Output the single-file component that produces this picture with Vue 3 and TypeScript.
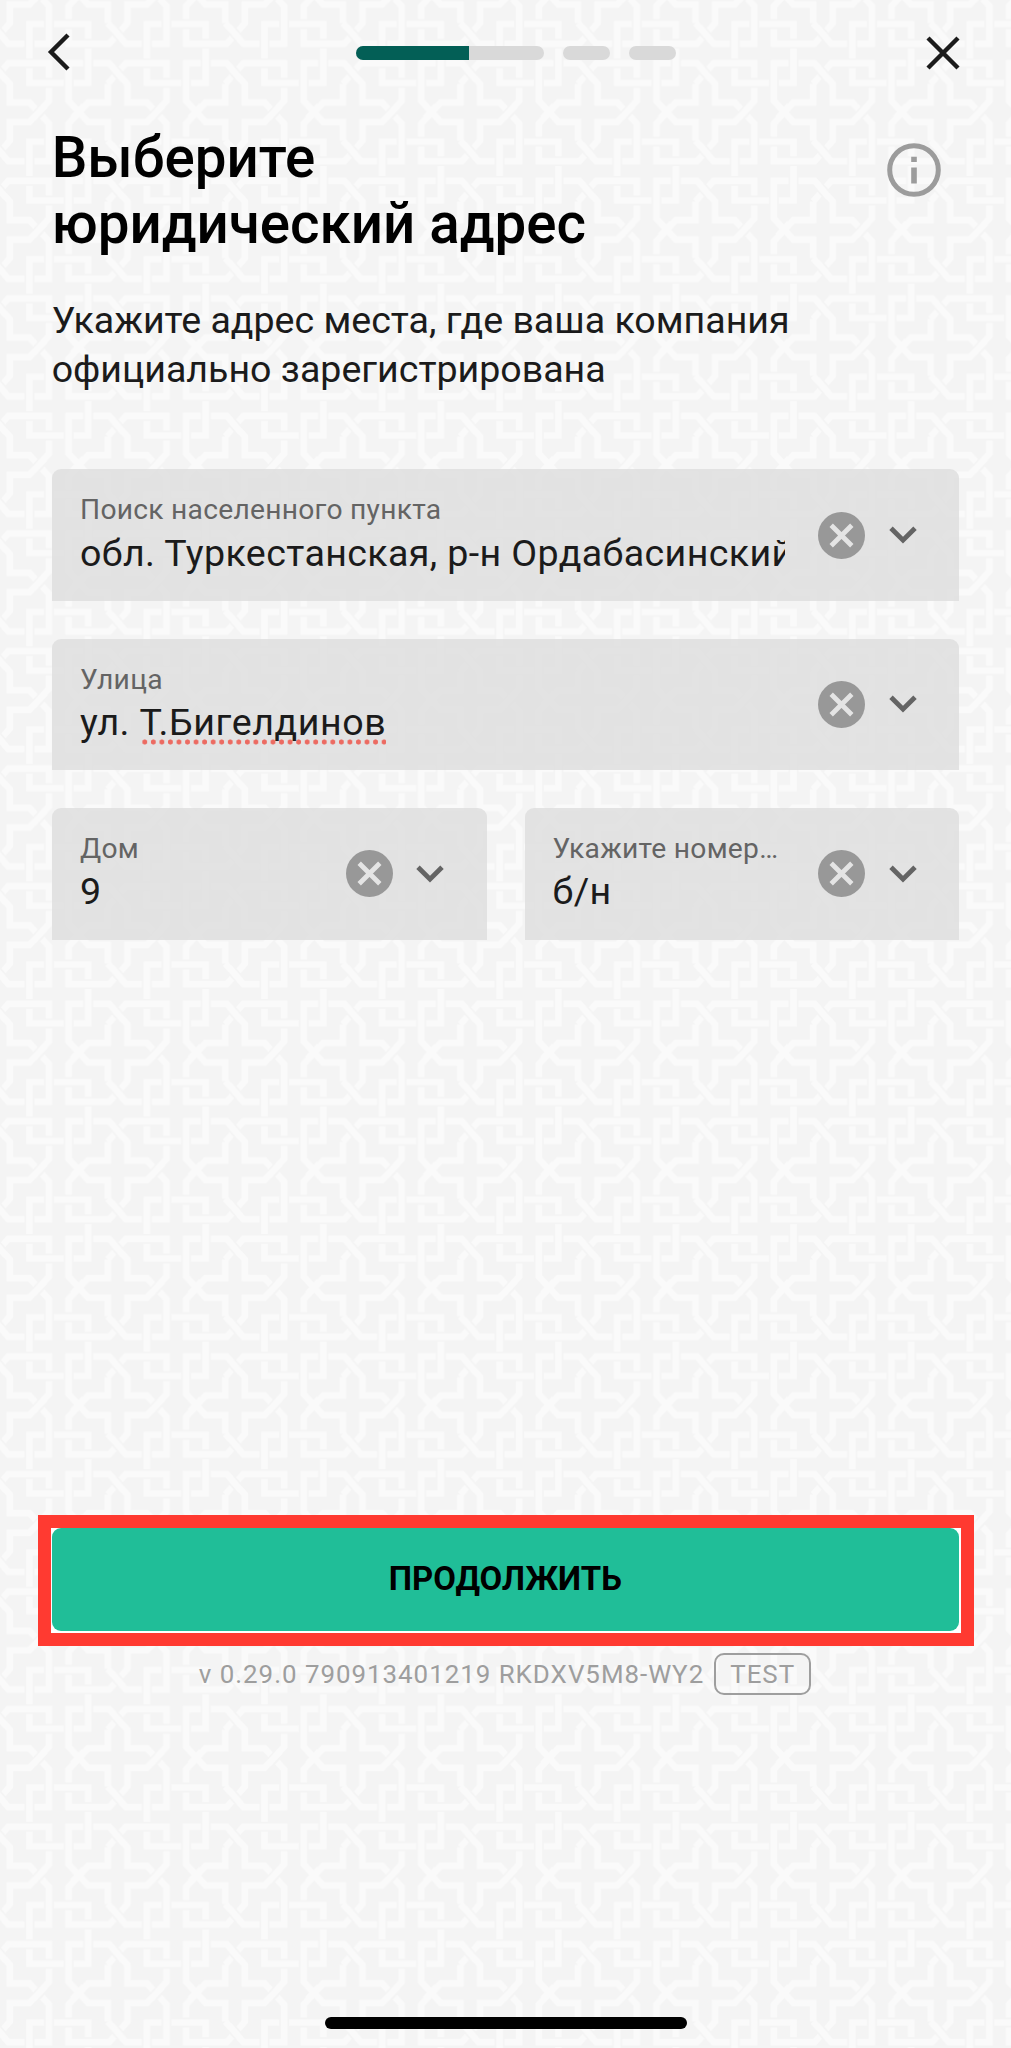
<script setup lang="ts">
interface Field {
  id: string
  label: string
  value: string
  typo?: string
  half?: boolean
}

const fields: Field[] = [
  { id: 'city', label: 'Поиск населенного пункта', value: 'обл. Туркестанская, р-н Ордабасинский' },
  { id: 'street', label: 'Улица', value: 'ул. ', typo: 'Т.Бигелдинов' },
  { id: 'house', label: 'Дом', value: '9', half: true },
  { id: 'flat', label: 'Укажите номер…', value: 'б/н', half: true },
]

const steps = [
  { id: 1, width: 188.4, progress: 60 },
  { id: 2, width: 47.2, progress: 0 },
  { id: 3, width: 47.2, progress: 0 },
]

// Neighbouring copies let strands run across the edges of a tile.
const offsets = [-6, 0, 6]
</script>

<template>
  <main class="screen">
    <svg class="ornament" width="1011" height="2048" aria-hidden="true">
      <defs>
        <g id="strands" fill="none" stroke="#fafafa" stroke-width="0.34">
          <path d="M-.5 4.45L.42 5.5H1.25M1.75 5.5H2.5V3.58L1.5 2.5H.5V1.55L-.42 .5H-1.25" />
          <path d="M-.5 1.55L.42 .5H2.5V1.25M2.5 1.75V2.42L1.5 3.5H.5V4.45L-.42 5.5H-2.5V4.75M-2.5 4.25V3.58L-1.5 2.5H-.5V1.55" />
          <path d="M-1.75 .5H-2.5V2.42L-1.5 3.5H-.5V4.45" />
          <path d="M1.5 1.25V.75M1.5 .25V-1.5H2.25M2.75 -1.5H4.5V-.75M4.5 -.25V1.5H3.75M3.25 1.5H1.5V.75" />
          <g stroke="#f4f4f4" stroke-width="0.5">
            <path d="M-.2 .77L.2 1.23M-.2 4.77L.2 5.23M1.8 3.21L2.2 2.78M3.8 3.21L4.2 2.78" />
          </g>
          <path d="M-.3 .65L.3 1.35M-.3 4.65L.3 5.35M1.7 3.3L2.3 2.65M3.7 3.3L4.3 2.65" />
        </g>
        <pattern
          id="lattice"
          width="6"
          height="6"
          patternUnits="userSpaceOnUse"
          patternTransform="translate(0 53.5) scale(19.593)"
        >
          <rect width="6" height="6" fill="#f4f4f4" />
          <template v-for="x in offsets" :key="x">
            <use v-for="y in offsets" :key="y" href="#strands" :x="x" :y="y" />
          </template>
        </pattern>
      </defs>
      <rect width="1011" height="2048" fill="url(#lattice)" />
    </svg>

    <header class="bar">
      <svg class="back" width="24" height="38" viewBox="0 0 24 38">
        <path d="M21 2L4 19L21 36" fill="none" stroke="#1b1b1b" stroke-width="4.4" />
      </svg>
      <div class="steps">
        <span v-for="s in steps" :key="s.id" class="step" :style="{ width: s.width + 'px' }">
          <span v-if="s.progress" class="done" :style="{ width: s.progress + '%' }"></span>
        </span>
      </div>
      <svg class="close" width="34" height="34" viewBox="0 0 34 34">
        <path d="M2 2L32 32M32 2L2 32" fill="none" stroke="#1b1b1b" stroke-width="4.4" />
      </svg>
    </header>

    <div class="heading">
      <h1>Выберите<br />юридический адрес</h1>
      <svg class="info" width="54" height="54" viewBox="0 0 54 54">
        <circle cx="27" cy="27" r="24.3" fill="none" stroke="#9c9c9c" stroke-width="5" />
        <path d="M24.2 13.7h5.6v5.4h-5.6zM24.2 24.5h5.6v16h-5.6z" fill="#9c9c9c" />
      </svg>
    </div>
    <p class="lead">Укажите адрес места, где ваша компания<br />официально зарегистрирована</p>

    <form class="fields" @submit.prevent>
      <div v-for="f in fields" :key="f.id" class="field" :class="{ half: f.half }">
        <div class="text">
          <div class="label">{{ f.label }}</div>
          <div class="value">{{ f.value }}<span v-if="f.typo" class="typo">{{ f.typo }}</span></div>
        </div>
        <svg class="clear" width="47" height="47" viewBox="0 0 47 47">
          <circle cx="23.5" cy="23.5" r="23.5" fill="#989898" />
          <path d="M13.2 13.2L33.8 33.8M33.8 13.2L13.2 33.8" fill="none" stroke="#e4e4e4" stroke-width="4.8" />
        </svg>
        <svg class="chevron" width="28" height="18" viewBox="0 0 28 18">
          <path d="M2 2.2L14 14.2L26 2.2" fill="none" stroke="#646464" stroke-width="4.8" />
        </svg>
      </div>
    </form>

    <div class="highlight">
      <button type="button" class="next">ПРОДОЛЖИТЬ</button>
    </div>

    <div class="version">
      <span>v 0.29.0 790913401219 RKDXV5M8-WY2</span>
      <span class="tag">TEST</span>
    </div>

    <div class="home"></div>
  </main>
</template>

<style>
body {
  margin: 0;
  background: #f4f4f4;
}
</style>

<style scoped>
.screen {
  position: relative;
  isolation: isolate;
  display: flex;
  flex-direction: column;
  width: 1011px;
  height: 2048px;
  overflow: hidden;
  box-sizing: border-box;
  font-family: Roboto, "Noto Sans", sans-serif;
  color: #1b1b1b;
}
.ornament {
  position: absolute;
  inset: 0;
  z-index: -1;
}
.bar {
  display: flex;
  align-items: center;
  justify-content: space-between;
  height: 106px;
  padding: 0 51px 0 47px;
  flex: none;
}
.back { margin-top: -2px; }
.steps {
  display: flex;
  gap: 18.7px;
  margin-left: 34.5px;
}
.step {
  height: 14px;
  border-radius: 7px;
  background: #d9d9d9;
  overflow: hidden;
}
.done {
  display: block;
  height: 100%;
  background: #035f56;
}
.heading {
  display: flex;
  justify-content: space-between;
  align-items: flex-start;
  margin: 20.4px 70px 0 51.7px;
}
h1 {
  margin: 0;
  font-size: 56.5px;
  line-height: 65.8px;
  font-weight: 500;
  color: #000;
}
.info { margin-top: 17.1px; }
.lead {
  margin: 38px 52px 0 51.7px;
  font-size: 37.55px;
  line-height: 49.4px;
}
.fields {
  display: flex;
  flex-wrap: wrap;
  gap: 37.8px 38px;
  margin: 74.5px 52px 0;
}
.field {
  display: flex;
  align-items: center;
  width: 100%;
  height: 131.6px;
  box-sizing: border-box;
  padding: 0 42.4px 0 28px;
  border-radius: 9px 9px 0 0;
  background: rgba(221, 221, 221, 0.8);
}
.field.half { width: 434.5px; }
.text {
  flex: 1;
  min-width: 0;
  align-self: flex-start;
  padding-top: 24px;
  margin-right: 32.8px;
}
.label {
  font-size: 28.2px;
  line-height: 33px;
  letter-spacing: 0.27px;
  color: #646464;
  white-space: nowrap;
}
.value {
  margin-top: 4.4px;
  padding-bottom: 3px;
  font-size: 37.6px;
  line-height: 44px;
  letter-spacing: 0.38px;
  white-space: nowrap;
  overflow: hidden;
}
.typo {
  padding-bottom: 1px;
  letter-spacing: 0.6px;
  background: radial-gradient(circle at 50% 50%, #ec6b62 2.2px, transparent 2.9px) 0.5px 100% / 8.55px 6px repeat-x;
}
.clear { flex: none; margin-right: 23.5px; }
.chevron { flex: none; }
.highlight {
  display: flex;
  height: 130.4px;
  margin: 575.8px 37px 0 37.7px;
  box-sizing: border-box;
  border: 13px solid #ff3a31;
  background: #fff;
  padding: 0 2px 2px 1px;
}
.next {
  flex: 1;
  border: 0;
  border-radius: 9px;
  background: #20be98;
  padding: 0 0 2px;
  font: 700 32.9px/38px Roboto, sans-serif;
  color: #000;
}
.version {
  display: flex;
  align-items: center;
  justify-content: center;
  gap: 10px;
  margin: 7px 1px 0 0;
  font-size: 25.9px;
  line-height: 30px;
  letter-spacing: 0.98px;
  color: #9e9e9e;
}
.tag {
  display: flex;
  align-items: center;
  justify-content: center;
  width: 97px;
  height: 42px;
  box-sizing: border-box;
  border: 2px solid #9e9e9e;
  border-radius: 10px;
}
.home {
  width: 362px;
  height: 12px;
  margin: auto auto 19px;
  border-radius: 6px;
  background: #000;
}
</style>
